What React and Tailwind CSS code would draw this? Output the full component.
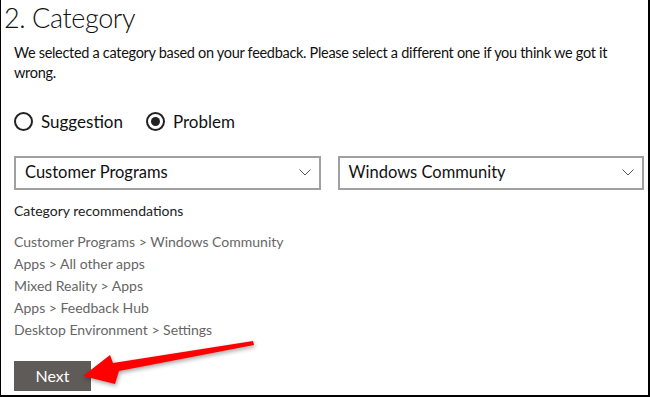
import React, { useState } from "react";

const recommendations = [
  "Customer Programs > Windows Community",
  "Apps > All other apps",
  "Mixed Reality > Apps",
  "Apps > Feedback Hub",
  "Desktop Environment > Settings",
];

function Chevron() {
  return (
    <svg width="12" height="7" viewBox="0 0 12 7" fill="none">
      <path d="M0.5 0.5 L6 6 L11.5 0.5" stroke="#555" strokeWidth="1" />
    </svg>
  );
}

function Radio({ checked, label, onClick }) {
  return (
    <label className="flex items-center gap-[8px] cursor-pointer" onClick={onClick}>
      <span className="w-[19px] h-[19px] rounded-full border-2 border-[#222] flex items-center justify-center">
        {checked && <span className="w-[9px] h-[9px] rounded-full bg-[#222]" />}
      </span>
      <span className="text-[17px] text-[#111]">{label}</span>
    </label>
  );
}

function Select({ value }) {
  return (
    <div className="flex-1 h-[34px] border-2 border-[#a0a0a0] flex items-center justify-between pl-[9px] pr-[8px]">
      <span className="text-[16.5px] text-[#111]">{value}</span>
      <Chevron />
    </div>
  );
}

export default function App() {
  const [kind, setKind] = useState("problem");

  return (
    <div
      className="relative w-[650px] h-[397px] bg-white border-l border-r-2 border-b-2 border-black overflow-hidden"
      style={{ fontFamily: 'Lato, "Noto Sans", sans-serif' }}
    >
      <h1 className="pl-[3px] pt-[1px] text-[27px] tracking-[-0.4px] font-light text-[#111] leading-[34px]">2. Category</h1>

      <div className="pl-[13px] pr-[4px]">
        {/* description */}
        <p className="mt-[8px] text-[14.5px] tracking-[-0.3px] leading-[20px] text-[#111]">
          We selected a category based on your feedback. Please select a different one if you think we got it wrong.
        </p>

        {/* type */}
        <div className="mt-[26px] flex items-center gap-[23px]">
          <Radio label="Suggestion" checked={kind === "suggestion"} onClick={() => setKind("suggestion")} />
          <Radio label="Problem" checked={kind === "problem"} onClick={() => setKind("problem")} />
        </div>

        {/* dropdowns */}
        <div className="mt-[21px] flex gap-[17px]">
          <Select value="Customer Programs" />
          <Select value="Windows Community" />
        </div>

        <p className="mt-[11px] text-[14px] leading-[20px] text-[#222]">Category recommendations</p>

        <ul className="mt-[10px]">
          {recommendations.map((r) => (
            <li key={r} className="text-[14px] leading-[22px] text-[#666]">
              {r}
            </li>
          ))}
        </ul>

        <button className="mt-[20px] w-[77px] h-[30px] bg-[#5f5b59] text-white text-[16px]">Next</button>
      </div>

      {/* red arrow */}
      <svg className="absolute left-0 top-0 pointer-events-none" width="650" height="397">
        <polygon
          points="82,376 109,355 112,363 252,341 253,345 118,371 114,384"
          fill="#ff0000"
          style={{ filter: "drop-shadow(1px 2px 2px rgba(0,0,0,0.35))" }}
        />
      </svg>
    </div>
  );
}
